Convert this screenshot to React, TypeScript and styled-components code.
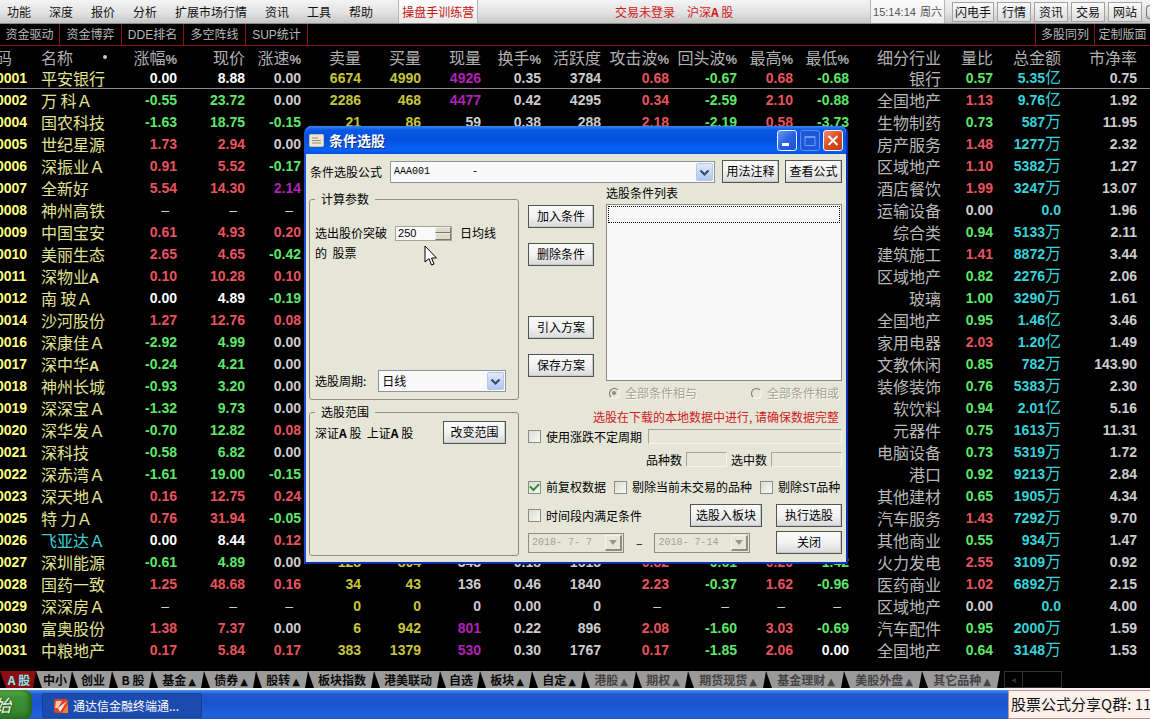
import React from "react";
import styled, { createGlobalStyle, css } from "styled-components";

const cjk = `"Noto Sans CJK SC", sans-serif`;
const cjkSmall = `"Liberation Sans", "Noto Sans CJK SC", sans-serif`;

const GlobalStyle = createGlobalStyle`
  * { box-sizing: border-box; }
  html, body { margin: 0; background: #000; }
  body {
    font-family: ${cjk};
    font-size: 12px;
    line-height: 14px;
    font-kerning: none;
    overflow-x: hidden;
  }
  button, input, select { font: inherit; margin: 0; padding: 0; border-radius: 0; }
`;

const Page = styled.div`
  position: relative;
  display: flex;
  flex-direction: column;
  min-height: 100vh;
  overflow: hidden;
  background: #000;
`;

/* ---------- menu bar ---------- */
const MenuBar = styled.header`
  display: flex;
  align-items: center;
  height: 24px;
  padding-left: 7px;
  background: linear-gradient(#f4f4f4, #e2e2e2 55%, #c6c6c6);
  border-bottom: 1px solid #8b8b86;
  white-space: nowrap;
  color: #111;
  overflow: hidden;
`;

const MenuList = styled.nav`
  display: flex;
  gap: 18px;
  flex: none;
`;

const MenuItem = styled.button`
  border: 0;
  background: none;
  color: inherit;
  flex: none;
`;

const CampButton = styled.button`
  flex: none;
  height: 23px;
  margin-left: 25px;
  padding: 0 3px;
  border: 1px solid #b5b5b5;
  border-top: 0;
  border-bottom: 0;
  background: linear-gradient(#fff, #e8e8e8);
  color: #c81414;
`;

const LoginState = styled.div`
  display: flex;
  gap: 12px;
  margin: 0 auto;
  color: #d01a1a;
`;

const Clock = styled.time`
  display: flex;
  align-items: center;
  gap: 4px;
  height: 23px;
  padding: 0 2px;
  border: solid #b5b5b5;
  border-width: 0 1px;
  background: linear-gradient(#fbfbfb, #ececec);
  font-family: ${cjkSmall};
  font-size: 11px;
  color: #555;
  flex: none;
`;

const QuickBar = styled.div`
  display: flex;
  gap: 3px;
  height: 20px;
  margin-left: 7px;
  flex: none;
`;

const QuickButton = styled.button`
  padding: 0 4px;
  border: 1px solid #a3a3a3;
  background: linear-gradient(#fafafa, #dcdcdc);
  color: #111;
  &:first-child { padding: 0 2px; }
`;

const RoundEnd = styled.div`
  flex: none;
  width: 4px;
  height: 14px;
  margin-left: 4px;
  border: 1px solid #777;
  border-right: 0;
  border-radius: 8px 0 0 8px;
`;

/* ---------- tool bar ---------- */
const ToolBar = styled.nav`
  display: flex;
  height: 22px;
  border-bottom: 1px solid #8c1020;
  background: #000;
  font-family: ${cjkSmall};
`;

const ToolItem = styled.button<{ $side?: "right" }>`
  flex: none;
  width: ${(p) => (p.$side ? 59 : 62)}px;
  border: solid #8c1020;
  border-width: ${(p) => (p.$side ? "0 0 0 1px" : "0 1px 0 0")};
  background: none;
  color: #b9b9b9;
  white-space: nowrap;
  overflow: hidden;
  &:first-child { width: 60px; }
  &:last-child { width: 56px; }
`;

const Spacer = styled.div`
  flex: 1;
`;

/* ---------- quotes table ---------- */
const Market = styled.main`
  flex: 1;
  padding-bottom: 10px;
  overflow: hidden;
`;

const Quotes = styled.table`
  width: calc(100% + 4px);
  margin-left: -4px;
  table-layout: fixed;
  border-collapse: separate;
  border-spacing: 0;
`;

type Tone = "up" | "down" | "flat" | "plain" | "volume" | "big" | "code" | "name" | "picked" | "amount" | "industry";
const tones: Record<Tone, string> = {
  up: "#e8545e",
  down: "#5fe66a",
  flat: "#ffffff",
  plain: "#cdcdcd",
  volume: "#c6c63a",
  big: "#b022b4",
  code: "#ffff80",
  name: "#e2e294",
  picked: "#3ccfd4",
  amount: "#38d2da",
  industry: "#b8b8b8",
};

const HeadCell = styled.th<{ $left?: boolean }>`
  height: 21px;
  padding: 0;
  font-size: 16px;
  line-height: 20px;
  font-weight: 400;
  color: #b0b0b0;
  text-align: ${(p) => (p.$left ? "left" : "right")};
  white-space: nowrap;
  &:last-child { padding-right: 13px; }
  b { font: 700 13px/1px "Liberation Sans", sans-serif; }
`;

const SortHead = styled.span`
  display: flex;
  align-items: center;
  justify-content: space-between;
  padding: 0 18px 0 13px;
  &::after {
    content: "";
    width: 4px;
    height: 4px;
    border-radius: 2px;
    background: #c8c8c8;
  }
`;

const Cell = styled.td<{ $tone: Tone; $text?: boolean; $indent?: boolean; $dash?: boolean }>`
  height: 22px;
  padding: 0 ${(p) => (p.$dash ? 8 : 0)}px 0 ${(p) => (p.$indent ? 13 : 0)}px;
  color: ${(p) => tones[p.$tone]};
  text-align: ${(p) => (p.$tone === "code" || p.$indent ? "left" : "right")};
  white-space: nowrap;
  ${(p) =>
    p.$text
      ? css`font: 400 16px/20px ${cjk};`
      : css`font: ${p.$dash ? 400 : 700} 14px/20px "Liberation Sans", sans-serif;`}
  &:last-child { padding-right: 13px; }
  small { font: 400 16px/1px ${cjk}; }
  b { font: 700 14px/1px "Liberation Sans", sans-serif; }
`;

const Row = styled.tr<{ $current: boolean }>`
  ${(p) => p.$current && css`td { border-bottom: 1px solid #8c8c8c; }`}
`;

const columns = ["码", "名称", "涨幅%", "现价", "涨速%", "卖量", "买量", "现量", "换手%", "活跃度", "攻击波%", "回头波%", "最高%", "最低%", "细分行业", "量比", "总金额", "市净率"];
const widths = [32, 97, 52, 68, 56, 60, 60, 60, 60, 60, 68, 68, 56, 56, 0, 52, 68, 89];

const H = "||||||||";
const source = `0001|平安银行|0.00|8.88|0.00|6674|4990|4926|0.35|3784|0.68|-0.67|0.68|-0.68|银行|0.57|5.35亿|0.75
0002|万 科Ａ|-0.55|23.72|0.00|2286|468|4477|0.42|4295|0.34|-2.59|2.10|-0.88|全国地产|1.13|9.76亿|1.92
0004|国农科技|-1.63|18.75|-0.15|21|86|59|0.38|288|2.18|-2.19|0.58|-3.73|生物制药|0.73|587万|11.95
0005|世纪星源|1.73|2.94|0.00|${H}|房产服务|1.48|1277万|2.32
0006|深振业Ａ|0.91|5.52|-0.17|${H}|区域地产|1.10|5382万|1.27
0007|全新好|5.54|14.30|2.14|${H}|酒店餐饮|1.99|3247万|13.07
0008|神州高铁|–|–|–|${H}|运输设备|0.00|0.0|1.96
0009|中国宝安|0.61|4.93|0.20|${H}|综合类|0.94|5133万|2.11
0010|美丽生态|2.65|4.65|-0.42|${H}|建筑施工|1.41|8872万|3.44
0011|深物业A|0.10|10.28|0.10|${H}|区域地产|0.82|2276万|2.06
0012|南 玻Ａ|0.00|4.89|-0.19|${H}|玻璃|1.00|3290万|1.61
0014|沙河股份|1.27|12.76|0.08|${H}|全国地产|0.95|1.46亿|3.46
0016|深康佳Ａ|-2.92|4.99|0.00|${H}|家用电器|2.03|1.20亿|1.49
0017|深中华A|-0.24|4.21|0.00|${H}|文教休闲|0.85|782万|143.90
0018|神州长城|-0.93|3.20|0.00|${H}|装修装饰|0.76|5383万|2.30
0019|深深宝Ａ|-1.32|9.73|0.00|${H}|软饮料|0.94|2.01亿|5.16
0020|深华发Ａ|-0.70|12.82|0.08|${H}|元器件|0.75|1613万|11.31
0021|深科技|-0.58|6.82|0.00|${H}|电脑设备|0.73|5319万|1.72
0022|深赤湾Ａ|-1.61|19.00|-0.15|${H}|港口|0.92|9213万|2.84
0023|深天地Ａ|0.16|12.75|0.24|${H}|其他建材|0.65|1905万|4.34
0025|特 力Ａ|0.76|31.94|-0.05|${H}|汽车服务|1.43|7292万|9.70
0026|飞亚达Ａ|0.00|8.44|0.12|${H}|其他商业|0.55|934万|1.47
0027|深圳能源|-0.61|4.89|0.00|128|804|343|0.18|1615|0.82|-0.61|0.20|-1.42|火力发电|2.55|3109万|0.92
0028|国药一致|1.25|48.68|0.16|34|43|136|0.46|1840|2.23|-0.37|1.62|-0.96|医药商业|1.02|6892万|2.15
0029|深深房Ａ|–|–|–|0|0|0|0.00|0|–|–|–|–|区域地产|0.00|0.0|4.00
0030|富奥股份|1.38|7.37|0.00|6|942|801|0.22|896|2.08|-1.60|3.03|-0.69|汽车配件|0.95|2000万|1.59
0031|中粮地产|0.17|5.84|0.17|383|1379|530|0.30|1767|0.17|-1.85|2.06|0.00|全国地产|0.64|3148万|1.53`;
const rows = source.split("\n").map((line) => line.split("|"));

const signTone = (v: string, zero: Tone): Tone => {
  const n = parseFloat(v);
  return n > 0 ? "up" : n < 0 ? "down" : zero;
};

function toneOf(row: string[], col: number): Tone {
  const v = row[col];
  if (v === "–") return "plain";
  if (col === 0) return "code";
  if (col === 1) return row[0] === "0026" ? "picked" : "name";
  if (col === 2 || col === 3) return signTone(row[2], "flat");
  if (col === 4) return parseFloat(v) > 2 ? "big" : signTone(v, "plain");
  if (col === 5 || col === 6) return "volume";
  if (col === 7) return parseFloat(v) > 500 ? "big" : "plain";
  if (col >= 10 && col <= 13) return signTone(v, "flat");
  if (col === 14) return "industry";
  if (col === 15) return v === "0.00" ? "plain" : parseFloat(v) > 1 ? "up" : "down";
  if (col === 16) return "amount";
  return "plain";
}

function cellContent(v: string, col: number) {
  const unit = v.slice(-1);
  if (col === 16 && (unit === "万" || unit === "亿")) return <>{v.slice(0, -1)}<small>{unit}</small></>;
  if (col === 1 && unit === "A") return <>{v.slice(0, -1)}<b>A</b></>;
  return v;
}

/* ---------- category tabs ---------- */
const TabStrip = styled.nav`
  display: flex;
  height: 17px;
  background: #000;
`;

const Tab = styled.button<{ $w: number; $active?: boolean; $dim?: boolean }>`
  flex: none;
  width: ${(p) => p.$w}px;
  padding-left: 2px;
  border: 0;
  background: ${(p) => (p.$active ? "#8c0c12" : "#9a9a9a")};
  color: ${(p) => (p.$active ? "#7ff0f0" : p.$dim ? "#444" : "#0a0a0a")};
  font-weight: 700;
  line-height: 16px;
  white-space: nowrap;
  clip-path: polygon(0 0, 100% 0, calc(100% - 3px) 100%, 6px 100%);
  small {
    margin-left: 2px;
    font: 10px/1px "DejaVu Sans", sans-serif;
  }
`;

const TabScroll = styled.div`
  display: flex;
  width: 58px;
  margin-left: 4px;
  border: 1px solid #333;
  color: #333;
  span {
    width: 18px;
    border-right: 1px solid #333;
    font-size: 10px;
    line-height: 14px;
    text-align: center;
  }
`;

const tabs: [string, number][] = [
  ["A 股", 36], ["中小", 36], ["创业", 40], ["B 股", 40], ["基金▲", 52], ["债券▲", 52], ["股转▲", 52],
  ["板块指数", 66], ["港美联动", 66], ["自选", 40], ["板块▲", 52], ["自定▲", 52], ["港股▲", 52],
  ["期权▲", 52], ["期货现货▲", 78], ["基金理财▲", 78], ["美股外盘▲", 78], ["其它品种▲", 78],
];

/* ---------- task bar ---------- */
const TaskBar = styled.footer`
  display: flex;
  align-items: stretch;
  height: 31px;
  border-top: 2px solid #eef4fb;
  background: linear-gradient(#4b93ee, #2059d2 14%, #1c52cc 45%, #1f62de 90%, #1c58cc);
  overflow: hidden;
`;

const StartButton = styled.button`
  width: 32px;
  border: 0;
  border-radius: 0 8px 8px 0;
  background: linear-gradient(#5cb04e, #3c9134 25%, #37892f 70%, #2a7426);
  box-shadow: inset -3px 0 4px #23651f;
  color: #fff;
  font-size: 17px;
  font-style: italic;
  text-align: left;
  text-shadow: 1px 1px 1px #1c4a18;
  text-indent: -6px;
  overflow: hidden;
`;

const TaskButton = styled.button`
  display: flex;
  align-items: center;
  gap: 5px;
  width: 160px;
  margin: 3px 0 1px 10px;
  padding-left: 11px;
  border: 1px solid #164095;
  border-radius: 2px;
  background: #1c4bb0;
  color: #fff;
`;

const Banner = styled.aside`
  width: 142px;
  margin-left: auto;
  padding-left: 2px;
  border: 1px solid #c98f85;
  border-right: 0;
  background: #fdf1ec;
  color: #111;
  font-size: 15px;
  line-height: 26px;
  white-space: nowrap;
  overflow: hidden;
`;

/* ---------- dialog ---------- */
const Dialog = styled.section`
  position: absolute;
  left: 304px;
  top: 126px;
  width: 544px;
  border: 2px solid #0c2fae;
  border-top: 0;
  border-left-color: #1a50d8;
  border-radius: 7px 7px 0 0;
  background: #e6e6d8;
  color: #000;
  overflow: hidden;
`;

const TitleBar = styled.div`
  display: flex;
  align-items: center;
  gap: 3px;
  height: 28px;
  padding: 0 3px;
  background: linear-gradient(#3a86f4, #0a58e6 14%, #0450dc 45%, #0462f8 85%, #0550dc);
  h1 {
    margin: 0 auto 0 2px;
    color: #fff;
    font-size: 14px;
    line-height: 20px;
    text-shadow: 1px 1px 0 #0a2a80;
  }
`;

const WindowButton = styled.button<{ $kind: "min" | "max" | "close" }>`
  width: 20px;
  height: 21px;
  border: 1px solid ${(p) => (p.$kind === "max" ? "#5c8cec" : "#f2f6ff")};
  border-radius: 3px;
  background: ${(p) =>
    p.$kind === "close"
      ? "linear-gradient(135deg, #ee8f72, #d94a22 50%, #c23a12)"
      : p.$kind === "max"
        ? "#1d58dc"
        : "linear-gradient(135deg, #6c9cf4, #2a62e4 50%, #1c50d0)"};
  svg { display: block; }
`;

const Body = styled.div`
  padding: 6px 4px 6px 3px;
`;

const PushButton = styled.button<{ $w: number }>`
  flex: none;
  width: ${(p) => p.$w}px;
  height: 23px;
  padding-bottom: 2px;
  border: 1px solid #55554f;
  background: linear-gradient(#fafafa, #f2f2f2 50%, #d9d9dd);
  box-shadow: inset -1px -1px 0 #c9c9c9;
  color: #000;
  white-space: nowrap;
`;

const FormulaRow = styled.div`
  display: flex;
  align-items: center;
  gap: 6px;
  height: 23px;
  padding-left: 1px;
  label { margin-right: 2px; }
  > :nth-child(2) { margin-right: 1px; }
`;

const SelectBox = styled.span`
  position: relative;
  display: flex;
  flex: 1;
  height: 22px;
  select {
    appearance: none;
    flex: 1;
    padding-left: 3px;
    border: 1px solid #8b95a0;
    background: #f9f9f9;
    color: #000;
    white-space: pre;
  }
  svg {
    position: absolute;
    right: 2px;
    top: 2px;
    pointer-events: none;
  }
`;

const Code = styled.select`
  font-family: "Liberation Mono", monospace;
  font-size: 10px;
`;

const Columns = styled.div`
  display: grid;
  grid-template-columns: 210px 1fr;
  column-gap: 9px;
  padding-top: 3px;
`;

const Groups = styled.div`
  display: flex;
  flex-direction: column;
  gap: 5px;
  padding-top: 6px;
`;

const Group = styled.fieldset<{ $h: number }>`
  min-width: 0;
  margin: 0;
  padding: 0 12px 0 5px;
  border: 1px solid #8e8e80;
  border-radius: 3px;
  height: ${(p) => p.$h}px;
  legend { padding: 0 6px; }
`;

const Line = styled.div<{ $h: number; $gap?: number; $top?: number; $end?: number }>`
  display: flex;
  align-items: center;
  height: ${(p) => p.$h}px;
  gap: ${(p) => p.$gap ?? 0}px;
  margin-top: ${(p) => p.$top ?? 0}px;
  padding-right: ${(p) => p.$end ?? 0}px;
  white-space: nowrap;
`;

const Spin = styled.span`
  display: flex;
  width: 57px;
  height: 15px;
  border: 1px solid #a5a596;
  background: #fafafa;
  input {
    width: 39px;
    border: 0;
    padding-left: 2px;
    background: none;
    font: 11px/13px "Liberation Sans", sans-serif;
    color: #000;
  }
  span {
    display: flex;
    flex-direction: column;
    flex: 1;
  }
  button {
    flex: 1;
    border: 1px solid;
    border-color: #eee #77776c #77776c #eee;
    background: #dcdccd;
  }
`;

const ListRow = styled.div`
  display: flex;
  gap: 12px;
  height: 195px;
`;

const Actions = styled.div`
  display: flex;
  flex-direction: column;
  gap: 15px;
  padding-top: 19px;
  button:nth-child(3) { margin-top: 35px; }
`;

const ListArea = styled.div`
  display: flex;
  flex-direction: column;
  flex: 1;
`;

const ListBox = styled.ul`
  height: 177px;
  margin: 4px 0 0;
  padding: 1px;
  border: 1px solid #8a8a82;
  background: #f8f8f8;
  list-style: none;
  li {
    height: 17px;
    border: 1px dotted #000;
  }
`;

const Option = styled.label<{ $disabled?: boolean }>`
  display: inline-flex;
  align-items: center;
  gap: 5px;
  white-space: nowrap;
  ${(p) => p.$disabled && css`color: #a3a395; text-shadow: 1px 1px 0 #fafaf2;`}
  input[type="checkbox"] {
    appearance: none;
    display: grid;
    place-items: center;
    width: 13px;
    height: 13px;
    border: 1px solid #8c8c82;
    background: linear-gradient(135deg, #dcdcd4, #f8f8f6);
  }
  input[type="checkbox"]:checked::after {
    content: "";
    width: 7px;
    height: 4px;
    margin-top: -2px;
    border: solid #2c8a34;
    border-width: 0 0 2px 2px;
    transform: rotate(-45deg);
  }
  input[type="radio"] {
    appearance: none;
    display: grid;
    place-items: center;
    width: 11px;
    height: 11px;
    border: 1px solid;
    border-color: #77776c #f8f8f0 #f8f8f0 #77776c;
    border-radius: 50%;
  }
  input[type="radio"]:checked::after {
    content: "";
    width: 4px;
    height: 4px;
    border-radius: 2px;
    background: #8c8c80;
  }
`;

const Warning = styled.p`
  margin: 10px 3px 0 0;
  color: #d0201c;
  text-align: right;
  white-space: nowrap;
`;

const Readout = styled.input<{ $w?: number }>`
  min-width: 0;
  height: 15px;
  border: 1px solid;
  border-color: #a5a596 #f6f6ee #f6f6ee #a5a596;
  background: none;
  ${(p) => (p.$w ? `width: ${p.$w}px; flex: none;` : "flex: 1;")}
`;

const DateField = styled.span`
  display: flex;
  width: 96px;
  height: 20px;
  border: 1px solid #8e8e80;
  input {
    flex: 1;
    min-width: 0;
    padding-left: 3px;
    border: 0;
    background: none;
    color: #a3a395;
    font: 10px/16px "Liberation Mono", monospace;
    white-space: pre;
  }
  button {
    width: 17px;
    margin: 1px;
    border: solid;
    border-width: 1px 2px 2px 1px;
    border-color: #f4f4ec #8e8e80 #8e8e80 #f4f4ec;
    background: none;
  }
  svg { display: block; margin: auto; }
`;

const Pointer = styled.svg`
  position: absolute;
  left: 424px;
  top: 245px;
`;

function DropArrow() {
  return (
    <svg width="17" height="18" viewBox="0 0 17 18">
      <defs>
        <linearGradient id="drop" x1="0" y1="0" x2="0" y2="1">
          <stop offset="0" stopColor="#dfeafc" />
          <stop offset="1" stopColor="#adc6f0" />
        </linearGradient>
      </defs>
      <rect x=".5" y=".5" width="16" height="17" rx="1" fill="url(#drop)" stroke="#b4c8ea" />
      <path d="M4.5 7.5 8.5 11.5 12.5 7.5" fill="none" stroke="#3c4c68" strokeWidth="2.2" />
    </svg>
  );
}

function DatePick({ label, value }: { label: string; value: string }) {
  return (
    <DateField>
      <input aria-label={label} defaultValue={value} disabled />
      <button aria-label={`展开${label}`} disabled>
        <svg width="8" height="5"><path d="M0 0h8L4 5z" fill="#9a9a8c" /></svg>
      </button>
    </DateField>
  );
}

function Check({ text, checked }: { text: string; checked?: boolean }) {
  return (
    <Option>
      <input type="checkbox" defaultChecked={checked} />
      {text}
    </Option>
  );
}

function StockPicker() {
  return (
    <Dialog role="dialog" aria-labelledby="picker-title">
      <TitleBar>
        <svg width="15" height="13">
          <rect x=".5" y=".5" width="14" height="12" rx="1" fill="#ece6d2" stroke="#c9c1a4" />
          <path d="M3 4h6M3 6.5h9M3 9h9" stroke="#97907a" />
        </svg>
        <h1 id="picker-title">条件选股</h1>
        <WindowButton $kind="min" aria-label="最小化">
          <svg width="18" height="19"><rect x="4" y="12" width="7" height="3" fill="#fff" /></svg>
        </WindowButton>
        <WindowButton $kind="max" aria-label="最大化">
          <svg width="18" height="19"><path d="M4 5.5h10v9H4zM4 6.5h10" fill="none" stroke="#6f9af0" /></svg>
        </WindowButton>
        <WindowButton $kind="close" aria-label="关闭窗口">
          <svg width="18" height="19"><path d="M4.500 5l9 9M13.500 5l-9 9" stroke="#fff" strokeWidth="2" /></svg>
        </WindowButton>
      </TitleBar>
      <Body>
        <FormulaRow>
          <label htmlFor="formula">条件选股公式</label>
          <SelectBox>
            <Code id="formula"><option>{"AAA001\u00a0\u00a0\u00a0\u00a0\u00a0\u00a0\u00a0-"}</option></Code>
            <DropArrow />
          </SelectBox>
          <PushButton $w={57}>用法注释</PushButton>
          <PushButton $w={57}>查看公式</PushButton>
        </FormulaRow>
        <Columns>
          <Groups>
            <Group $h={208}>
              <legend>计算参数</legend>
              <Line $h={16} $gap={8} $top={19}>
                <label htmlFor="days">选出股价突破</label>
                <Spin>
                  <input id="days" defaultValue="250" inputMode="numeric" />
                  <span>
                    <button aria-label="增加" />
                    <button aria-label="减少" />
                  </span>
                </Spin>
                日均线
              </Line>
              <Line $h={16} $top={4}>的&nbsp; 股票</Line>
              <Line $h={22} $gap={12} $top={109}>
                <label htmlFor="period">选股周期:</label>
                <SelectBox>
                  <select id="period"><option>日线</option></select>
                  <DropArrow />
                </SelectBox>
              </Line>
            </Group>
            <Group $h={151}>
              <legend>选股范围</legend>
              <Line $h={23} $top={2}>
                <span>深证<b>A</b> 股&nbsp; 上证<b>A</b> 股</span>
                <Spacer />
                <PushButton $w={63}>改变范围</PushButton>
              </Line>
            </Group>
          </Groups>
          <div>
            <ListRow>
              <Actions>
                <PushButton $w={66}>加入条件</PushButton>
                <PushButton $w={66}>删除条件</PushButton>
                <PushButton $w={66}>引入方案</PushButton>
                <PushButton $w={66}>保存方案</PushButton>
              </Actions>
              <ListArea>
                <span id="list-title">选股条件列表</span>
                <ListBox role="listbox" aria-labelledby="list-title">
                  <li role="option" aria-selected="false" />
                </ListBox>
              </ListArea>
            </ListRow>
            <Line $h={14} $top={5} $gap={54} $end={3}>
              <Spacer />
              <Option $disabled><input type="radio" name="join" defaultChecked disabled />全部条件相与</Option>
              <Option $disabled><input type="radio" name="join" disabled />全部条件相或</Option>
            </Line>
            <Warning>选股在下载的本地数据中进行, 请确保数据完整</Warning>
            <Line $h={15} $top={5} $gap={6}>
              <Check text="使用涨跌不定周期" />
              <Readout aria-label="不定周期" readOnly />
            </Line>
            <Line $h={15} $top={8} $gap={4}>
              <Spacer />
              <label htmlFor="total">品种数</label>
              <Readout id="total" $w={41} readOnly />
              <label htmlFor="hits">选中数</label>
              <Readout id="hits" $w={71} readOnly />
            </Line>
            <Line $h={14} $top={13} $gap={8}>
              <Check text="前复权数据" checked />
              <Check text="剔除当前未交易的品种" />
              <Check text="剔除ST品种" />
            </Line>
            <Line $h={23} $top={10} $gap={14}>
              <Check text="时间段内满足条件" />
              <Spacer />
              <PushButton $w={72}>选股入板块</PushButton>
              <PushButton $w={66}>执行选股</PushButton>
            </Line>
            <Line $h={23} $top={4} $gap={12}>
              <DatePick label="开始日期" value="2018- 7- 7" />
              –
              <DatePick label="结束日期" value="2018- 7-14" />
              <Spacer />
              <PushButton $w={66}>关闭</PushButton>
            </Line>
          </div>
        </Columns>
      </Body>
    </Dialog>
  );
}

export default function App() {
  return (
    <Page>
      <GlobalStyle />
      <MenuBar>
        <MenuList>
          {["功能", "深度", "报价", "分析", "扩展市场行情", "资讯", "工具", "帮助"].map((m) => (
            <MenuItem key={m}>{m}</MenuItem>
          ))}
        </MenuList>
        <CampButton>操盘手训练营</CampButton>
        <LoginState>
          <span>交易未登录</span>
          <span>沪深<b>A</b> 股</span>
        </LoginState>
        <Clock>15:14:14 <span>周六</span></Clock>
        <QuickBar>
          {["闪电手", "行情", "资讯", "交易", "网站"].map((q) => (
            <QuickButton key={q}>{q}</QuickButton>
          ))}
        </QuickBar>
        <RoundEnd />
      </MenuBar>
      <ToolBar>
        {["资金驱动", "资金博弈", "DDE排名", "多空阵线", "SUP统计"].map((t) => (
          <ToolItem key={t}>{t}</ToolItem>
        ))}
        <Spacer />
        <ToolItem $side="right">多股同列</ToolItem>
        <ToolItem $side="right">定制版面</ToolItem>
      </ToolBar>
      <Market>
        <Quotes>
          <colgroup>
            {widths.map((w, i) => (
              <col key={i} width={w || undefined} />
            ))}
          </colgroup>
          <thead>
            <tr>
              {columns.map((c, i) => (
                <HeadCell key={c} $left={i < 2}>
                  {i === 1 ? <SortHead>{c}</SortHead> : c.endsWith("%") ? <>{c.slice(0, -1)}<b>%</b></> : c}
                </HeadCell>
              ))}
            </tr>
          </thead>
          <tbody>
            {rows.map((r) => (
              <Row key={r[0]} $current={r[0] === "0001"}>
                {r.map((v, i) => (
                  <Cell key={i} $tone={toneOf(r, i)} $text={i === 1 || i === 14} $indent={i === 1} $dash={v === "–"}>
                    {cellContent(v, i)}
                  </Cell>
                ))}
              </Row>
            ))}
          </tbody>
        </Quotes>
      </Market>
      <TabStrip>
        {tabs.map(([name, w], i) => (
          <Tab key={name} $w={w} $active={i === 0} $dim={i > 11}>
            {name.replace("▲", "")}
            {name.endsWith("▲") && <small>▲</small>}
          </Tab>
        ))}
        <TabScroll><span>◂</span></TabScroll>
      </TabStrip>
      <TaskBar>
        <StartButton>始</StartButton>
        <TaskButton>
          <svg width="14" height="14">
            <rect width="14" height="14" rx="2" fill="#d8402a" />
            <path d="M2 2h6L4 9H1z" fill="#f8c8a8" />
            <path d="M13 2 6 13 4 9z" fill="#fff" opacity=".85" />
            <path d="M14 5v9H8z" fill="#f08030" />
          </svg>
          通达信金融终端通...
        </TaskButton>
        <Banner>股票公式分享Q群: 11</Banner>
      </TaskBar>
      <StockPicker />
      <Pointer width="13" height="22" viewBox="0 0 13 22" aria-hidden="true">
        <path d="M1 1v16l4-3.500 2.500 6.500 2.500-1-2.500-6h5z" fill="#fff" stroke="#000" />
      </Pointer>
    </Page>
  );
}
